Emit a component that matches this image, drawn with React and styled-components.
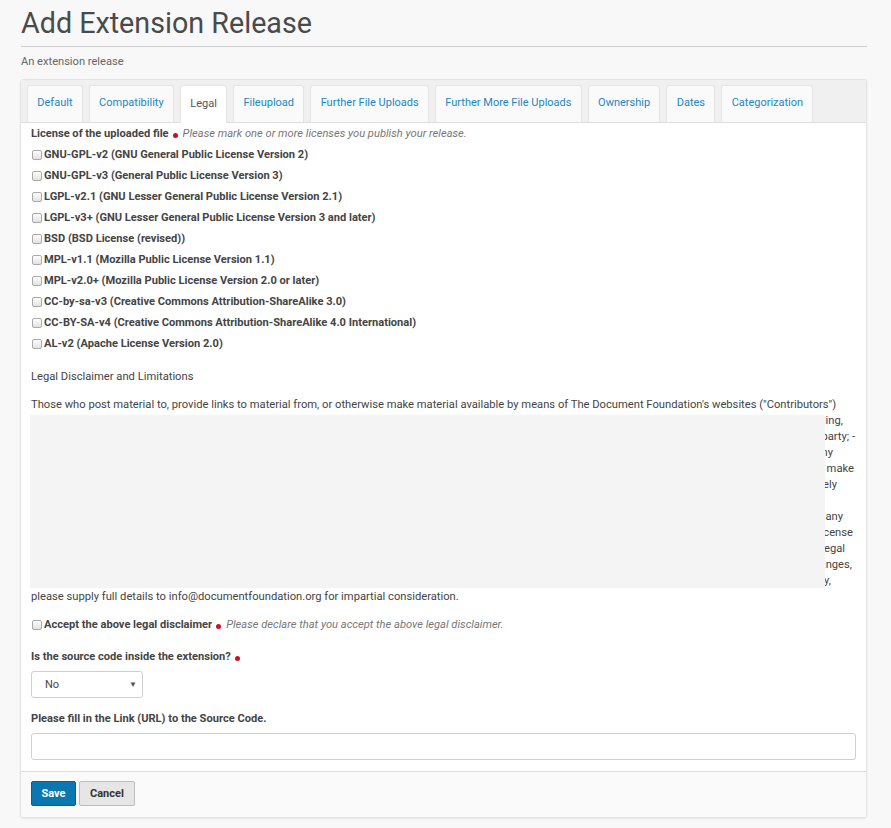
import React from "react";
import styled, { createGlobalStyle } from "styled-components";

const GlobalStyle = createGlobalStyle`
  html, body { margin: 0; padding: 0; }
  body {
    background: #f8f8f8;
    font-family: Roboto, "Liberation Sans", Arial, sans-serif;
    font-size: 11px;
    color: #444;
  }
`;

const Page = styled.div`
  padding: 0 24px 10px 20px;
`;

const Title = styled.h1`
  margin: 0 0 0 1px;
  padding: 5px 0 5px;
  font-size: 28.7px;
  line-height: 36px;
  font-weight: 400;
  color: #4a4a4a;
  border-bottom: 1px solid #cfcfcf;
`;

const Description = styled.p`
  margin: 7px 0 0 1px;
  line-height: 16px;
  font-size: 11.1px;
  color: #666;
`;

const Panel = styled.div`
  margin-top: 9px;
  border: 1px solid #e3e3e3;
  border-radius: 3px;
  background: #fafafa;
  box-shadow: 0 1px 2px rgba(0, 0, 0, 0.07);
`;

const TabBar = styled.div`
  display: flex;
  gap: 6px;
  padding: 5px 6px 0;
  background: #f0f0f0;
  border-bottom: 1px solid #dedede;
`;

const Tab = styled.div`
  box-sizing: border-box;
  padding: 0 9.3px 3px;
  display: flex;
  align-items: center;
  border: 1px solid #e4e4e4;
  border-bottom: none;
  border-radius: 3px 3px 0 0;
  background: ${(p) => (p.$active ? "#fff" : "#fafafa")};
  color: ${(p) => (p.$active ? "#555" : "#1c87c2")};
  font-size: 11px;
  margin-bottom: ${(p) => (p.$active ? "-1px" : "0")};
  height: ${(p) => (p.$active ? "38px" : "37px")};
`;

const Content = styled.div`
  background: #fff;
  padding: 0 10px 11px;
  border-bottom: 1px solid #dcdcdc;
`;

const Row = styled.div`
  height: 21px;
  display: flex;
  align-items: center;
  margin-top: ${(p) => p.$mt || 0}px;
`;

const Label = styled.span`
  font-weight: 700;
  font-size: 11.1px;
  color: #444;
`;

const Required = styled.span`
  display: inline-block;
  width: 5px;
  height: 5px;
  border-radius: 50%;
  background: #c8102e;
  margin: 4px 5px 0 4px;
`;

const Hint = styled.span`
  font-style: italic;
  font-size: 11.15px;
  color: #777;
`;

const Check = styled.input.attrs({ type: "checkbox" })`
  appearance: none;
  -webkit-appearance: none;
  width: 10px;
  height: 10px;
  margin: 1px 2px 0 1px;
  border: 1px solid #a9a9a9;
  border-radius: 2px;
  background: linear-gradient(#fdfdfd, #e2e2e2);
  flex: none;
`;

const Text = styled.p`
  margin: ${(p) => p.$mt || 0}px 0 0;
  line-height: 16px;
  font-size: 11.2px;
  color: #444;
`;

const Disclaimer = styled.div`
  position: relative;
  margin-top: 12px;
  line-height: 16px;
  font-size: 11.2px;
  color: #444;
`;

const Line = styled.div`
  white-space: nowrap;
`;

const CoveredLine = styled.div`
  direction: rtl;
  white-space: nowrap;
  overflow: hidden;
  padding-right: ${(p) => p.$trail}px;
  & > span {
    direction: ltr;
    unicode-bidi: isolate;
  }
`;

const Cover = styled.div`
  position: absolute;
  left: -1px;
  top: 18px;
  width: 795px;
  height: 173px;
  background: #f4f4f4;
`;

const SelectWrap = styled.div`
  position: relative;
  width: 112px;
  margin-top: 4px;
  &::after {
    content: "▼";
    position: absolute;
    right: 6px;
    top: 9px;
    font-size: 8px;
    color: #555;
    pointer-events: none;
  }
`;

const Select = styled.select`
  appearance: none;
  -webkit-appearance: none;
  width: 112px;
  height: 27px;
  padding: 0 0 0 13px;
  border: 1px solid #cfcfcf;
  border-radius: 3px;
  background: #fff;
  font-family: Roboto, "Liberation Sans", Arial, sans-serif;
  font-size: 11px;
  color: #444;
`;

const TextInput = styled.input`
  display: block;
  box-sizing: border-box;
  width: 100%;
  height: 27px;
  margin-top: 4px;
  border: 1px solid #cfcfcf;
  border-radius: 3px;
  background: #fff;
`;

const Footer = styled.div`
  display: flex;
  gap: 3px;
  padding: 9px 10px 11px;
  background: #fafafa;
`;

const Button = styled.button`
  height: 25px;
  padding: 0 ${(p) => (p.$primary ? 9.5 : 10)}px;
  border-radius: 2px;
  border: 1px solid ${(p) => (p.$primary ? "#08628f" : "#bdbdbd")};
  background: ${(p) => (p.$primary ? "#0a77b0" : "#e6e6e6")};
  color: ${(p) => (p.$primary ? "#fff" : "#333")};
  font-family: Roboto, "Liberation Sans", Arial, sans-serif;
  font-size: 11px;
  font-weight: 700;
`;

const tabs = [
  "Default",
  "Compatibility",
  "Legal",
  "Fileupload",
  "Further File Uploads",
  "Further More File Uploads",
  "Ownership",
  "Dates",
  "Categorization",
];

const licenses = [
  "GNU-GPL-v2 (GNU General Public License Version 2)",
  "GNU-GPL-v3 (General Public License Version 3)",
  "LGPL-v2.1 (GNU Lesser General Public License Version 2.1)",
  "LGPL-v3+ (GNU Lesser General Public License Version 3 and later)",
  "BSD (BSD License (revised))",
  "MPL-v1.1 (Mozilla Public License Version 1.1)",
  "MPL-v2.0+ (Mozilla Public License Version 2.0 or later)",
  "CC-by-sa-v3 (Creative Commons Attribution-ShareAlike 3.0)",
  "CC-BY-SA-v4 (Creative Commons Attribution-ShareAlike 4.0 International)",
  "AL-v2 (Apache License Version 2.0)",
];

const covered = [
  { text: "represent and warrant that they own or otherwise control all of the rights to the material they make available, including,", trail: 13 },
  { text: "that use of the material does not violate this policy and will not cause injury to any person or entity or any third party; -", trail: 1 },
  { text: "that the material does not contain viruses, malware or any", trail: 23 },
  { text: "other harmful code, and that they are legally entitled to make", trail: 2 },
  { text: "the material available for use by others, entirely and solely", trail: 19 },
  { text: "at their own responsibility.", trail: 120 },
  { text: "The Document Foundation does not review material for any", trail: 13 },
  { text: "infringement and is not responsible for any violation of license", trail: 3 },
  { text: "terms by Contributors. If you believe that there is any legal", trail: 11 },
  { text: "problem with material, or if you want to request changes,", trail: 4 },
  { text: "corrections or removal of material from the websites quickly,", trail: 25 },
];

export default function App() {
  return (
    <>
      <GlobalStyle />
      <Page>
        <Title>Add Extension Release</Title>
        <Description>An extension release</Description>
        <Panel>
          <TabBar>
            {tabs.map((t) => (
              <Tab key={t} $active={t === "Legal"}>
                {t}
              </Tab>
            ))}
          </TabBar>
          <Content>
            <Row>
              <Label>License of the uploaded file</Label>
              <Required />
              <Hint>Please mark one or more licenses you publish your release.</Hint>
            </Row>
            {licenses.map((l) => (
              <Row key={l}>
                <Check />
                <Label>{l}</Label>
              </Row>
            ))}
            <Text $mt={15}>Legal Disclaimer and Limitations</Text>
            <Disclaimer>
              <Line>
                Those who post material to, provide links to material from, or otherwise make material available by means of The Document Foundation's websites ("Contributors")
              </Line>
              {covered.map((c, i) => (
                <CoveredLine key={i} $trail={c.trail}>
                  <span>{c.text}</span>
                </CoveredLine>
              ))}
              <Line>please supply full details to info@documentfoundation.org for impartial consideration.</Line>
              <Cover />
            </Disclaimer>
            <Row $mt={9}>
              <Check />
              <Label>Accept the above legal disclaimer</Label>
              <Required />
              <Hint>Please declare that you accept the above legal disclaimer.</Hint>
            </Row>
            <Row $mt={11}>
              <Label>Is the source code inside the extension?</Label>
              <Required />
            </Row>
            <SelectWrap>
              <Select defaultValue="No">
                <option>No</option>
                <option>Yes</option>
              </Select>
            </SelectWrap>
            <Row $mt={10}>
              <Label>Please fill in the Link (URL) to the Source Code.</Label>
            </Row>
            <TextInput type="text" />
          </Content>
          <Footer>
            <Button $primary>Save</Button>
            <Button>Cancel</Button>
          </Footer>
        </Panel>
      </Page>
    </>
  );
}
